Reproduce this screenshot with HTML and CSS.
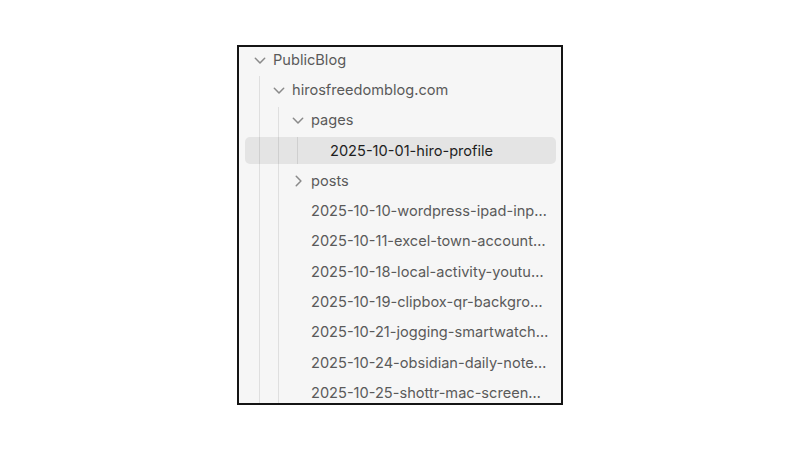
FILE: index.html
```html
<!DOCTYPE html>
<html lang="en">
<head>
<meta charset="utf-8">
<title>File explorer</title>
<link rel="stylesheet" href="styles.css">
</head>
<body>
<div class="frame">
  <div class="tree">
    <div class="row lv0"><span class="slot"><svg class="chev" viewBox="0 0 24 24"><path d="M4 9 L12 17 L20 9"/></svg></span><span class="name">PublicBlog</span></div>
    <div class="children g0">
      <div class="row lv1"><span class="slot"><svg class="chev" viewBox="0 0 24 24"><path d="M4 9 L12 17 L20 9"/></svg></span><span class="name">hirosfreedomblog.com</span></div>
      <div class="children g1">
        <div class="row lv2"><span class="slot"><svg class="chev" viewBox="0 0 24 24"><path d="M4 9 L12 17 L20 9"/></svg></span><span class="name">pages</span></div>
        <div class="children g2">
          <div class="row lv3 active"><span class="slot"></span><span class="name">2025-10-01-hiro-profile</span></div>
        </div>
        <div class="row lv2"><span class="slot"><svg class="chev" viewBox="0 0 24 24"><path d="M9 4 L17 12 L9 20"/></svg></span><span class="name">posts</span></div>
        <div class="row lv2"><span class="slot"></span><span class="name">2025-10-10-wordpress-ipad-inp…</span></div>
        <div class="row lv2"><span class="slot"></span><span class="name">2025-10-11-excel-town-account…</span></div>
        <div class="row lv2"><span class="slot"></span><span class="name">2025-10-18-local-activity-youtu…</span></div>
        <div class="row lv2"><span class="slot"></span><span class="name">2025-10-19-clipbox-qr-backgro…</span></div>
        <div class="row lv2"><span class="slot"></span><span class="name">2025-10-21-jogging-smartwatch…</span></div>
        <div class="row lv2"><span class="slot"></span><span class="name">2025-10-24-obsidian-daily-note…</span></div>
        <div class="row lv2"><span class="slot"></span><span class="name">2025-10-25-shottr-mac-screen…</span></div>
      </div>
    </div>
  </div>
</div>
</body>
</html>
```

FILE: styles.css
```css
html, body {
  margin: 0;
  padding: 0;
  background: #ffffff;
}
body {
  height: 100vh;
  display: flex;
  align-items: center;
  justify-content: center;
  font-family: Inter, "Noto Sans", "Liberation Sans", sans-serif;
}
.frame {
  box-sizing: border-box;
  width: 326px;
  height: 360px;
  border: 2px solid #141414;
  background: #f6f6f6;
  overflow: hidden;
  padding: 0 5px 0 6px;
}
.tree {
  margin-top: -1px;
}
.children {
  position: relative;
}
.children::before {
  content: "";
  position: absolute;
  top: 0;
  bottom: 0;
  width: 1px;
  background: rgba(0, 0, 0, 0.09);
  z-index: 1;
}
.g0::before { left: 14px; }
.g1::before { left: 33px; }
.g2::before { left: 52px; }
.row {
  height: 27.6px;
  margin-bottom: 2.7px;
  display: flex;
  align-items: center;
  border-radius: 5px;
  color: #5a5a5a;
  font-size: 14.6px;
  white-space: nowrap;
}
.row.active {
  background: #e4e4e4;
  color: #1e1e1e;
}
.lv0 { padding-left: 6px; }
.lv1 { padding-left: 25px; }
.lv2 { padding-left: 44px; }
.lv3 { padding-left: 63px; }
.slot {
  flex: 0 0 17px;
  width: 17px;
  height: 17px;
  margin-right: 5px;
  display: flex;
  align-items: center;
  justify-content: center;
}
.chev {
  width: 14px;
  height: 14px;
  fill: none;
  stroke: #8a8a8a;
  stroke-width: 2.6;
  stroke-linecap: round;
  stroke-linejoin: round;
}
```
